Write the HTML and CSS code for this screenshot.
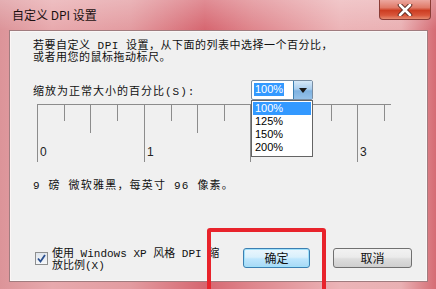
FILE: index.html
```html
<!DOCTYPE html>
<html>
<head>
  <meta charset="UTF-8">
  <title>自定义 DPI 设置</title>
  <link rel="stylesheet" href="styles.css">
</head>
<body>
  <div class="window">
    <div class="titlebar">
      <span class="title">自定义 DPI 设置</span>
      <div class="close-btn">
        <svg width="16" height="12" viewBox="0 0 16 12">
          <path d="M3 1 L13 11 M13 1 L3 11" stroke="#5a2a22" stroke-width="4.5" stroke-linecap="round"/>
          <path d="M3 1 L13 11 M13 1 L3 11" stroke="#fff" stroke-width="2.6" stroke-linecap="round"/>
        </svg>
      </div>
    </div>

    <div class="client">
      <p class="intro">若要自定义 DPI 设置，从下面的列表中选择一个百分比，<br>或者用您的鼠标拖动标尺。</p>

      <div class="scale-row">
        <span class="scale-label">缩放为正常大小的百分比(S):</span>
        <div class="combo">
          <div class="combo-field"><span class="combo-sel">100%</span></div>
          <div class="combo-btn">
            <svg width="8" height="5" viewBox="0 0 8 5"><path d="M0 0 H8 L4 5 Z" fill="#1a1a1a"/></svg>
          </div>
          <ul class="combo-list">
            <li class="active">100%</li>
            <li>125%</li>
            <li>150%</li>
            <li>200%</li>
          </ul>
        </div>
      </div>

      <div class="ruler">
        <svg width="356" height="58" viewBox="0 0 356 58">
          <g stroke="#8c8c8c" stroke-width="1">
            <path d="M0 0.5 H354"/>
            <path d="M0.5 0 V58 M107.5 0 V58 M213.5 0 V58 M320.5 0 V58"/>
            <path d="M27.5 0 V17 M80.5 0 V17 M134.5 0 V17 M187.5 0 V17 M240.5 0 V17 M294.5 0 V17 M347.5 0 V17"/>
            <path d="M53.5 0 V29 M160.5 0 V29 M267.5 0 V29"/>
          </g>
          <!-- 刻度 2 被下拉列表挡住 -->
          <g class="ruler-num">
            <text x="3" y="52">0</text>
            <text x="110" y="52">1</text>
            <text x="323" y="52">3</text>
          </g>
        </svg>
      </div>

      <p class="info">9 磅 微软雅黑，每英寸 96 像素。</p>

      <div class="footer">
        <label class="xp-check">
          <span class="checkbox">
            <svg width="9" height="9" viewBox="0 0 9 9"><path d="M1 4.5 L3.5 7.5 L8 1" fill="none" stroke="#2a4f8f" stroke-width="1.8"/></svg>
          </span>
          <span class="xp-text">使用 Windows XP 风格 DPI 缩<br>放比例(X)</span>
        </label>
        <button class="btn btn-ok">确定</button>
        <button class="btn btn-cancel">取消</button>
      </div>
    </div>

    <div class="highlight"></div>
  </div>
</body>
</html>
```

FILE: styles.css
```css
body {
  margin: 0;
  width: 436px;
  height: 289px;
  overflow: hidden;
  font-family: "Liberation Mono", "Noto Sans CJK SC", monospace;
}

.window {
  position: relative;
  width: 436px;
  height: 289px;
  box-sizing: border-box;
  padding: 0 8px 7px 9px;
  display: flex;
  flex-direction: column;
  background:
    linear-gradient(180deg, rgba(255, 255, 255, 0.25) 0%, rgba(255, 255, 255, 0) 30px),
    linear-gradient(90deg, #dc9499 0%, #e8a9ad 12%, #e39ba0 30%, #d66670 47%, #df868d 58%, #ecb4b7 78%, #eab0b3 92%, #d56c74 100%);
}

.titlebar {
  height: 30px;
  display: flex;
  justify-content: space-between;
  align-items: flex-start;
}

.title {
  margin: 6px 0 0 3px;
  font-family: "Noto Sans CJK SC", sans-serif;
  font-size: 12px;
  line-height: 18px;
  color: #1a1010;
}

.close-btn {
  width: 52px;
  height: 20px;
  margin-right: -3px;
  box-sizing: border-box;
  border: 1px solid #8a3c35;
  border-top: none;
  border-radius: 0 0 4px 4px;
  background: linear-gradient(180deg, #eca79f 0%, #e07a68 40%, #cc3d22 55%, #d8553a 80%, #e58a70 100%);
  display: flex;
  align-items: center;
  justify-content: center;
}

.client {
  flex: 1;
  background: #f0f0f0;
  border: 1px solid #a07c7f;
  box-shadow: inset 0 0 0 1px #fbf6f6;
  padding: 0 10px 0 23px;
  display: flex;
  flex-direction: column;
  font-size: 11px;
  color: #111;
}

.intro {
  margin: 9px 0 0;
  line-height: 12px;
  letter-spacing: 0.5px;
}

.scale-row {
  display: flex;
  align-items: center;
  margin-top: 16px;
  height: 20px;
}

.scale-label {
  width: 218px;
  letter-spacing: 1px;
}

.combo {
  position: relative;
  width: 62px;
  height: 20px;
  display: flex;
  box-sizing: border-box;
  border: 1px solid #7a8ea3;
  border-radius: 2px;
  background: #fff;
}

.combo-field {
  flex: 1;
  padding: 2px 0 0 2px;
}

.combo-sel {
  display: inline-block;
  background: #3399ff;
  color: #fff;
  font-family: "Liberation Sans", sans-serif;
  font-size: 11px;
  line-height: 13px;
  padding: 0 1px;
}

.combo-btn {
  width: 18px;
  border-left: 1px solid #3c7fb1;
  background: linear-gradient(180deg, #d6e9f8 0%, #a9cdee 45%, #7fb2e0 55%, #95c2ea 100%);
  display: flex;
  align-items: center;
  justify-content: center;
}

.combo-list {
  position: absolute;
  top: 19px;
  left: -1px;
  width: 62px;
  height: 57px;
  margin: 0;
  padding: 1px;
  box-sizing: border-box;
  list-style: none;
  background: #fff;
  border: 1px solid #646464;
  font-family: "Liberation Sans", sans-serif;
  font-size: 11px;
  color: #000;
  z-index: 10;
}

.combo-list li {
  height: 13px;
  line-height: 13px;
  padding-left: 2px;
}

.combo-list li.active {
  background: #3399ff;
  color: #fff;
}

.ruler {
  margin: 4px 0 0 4px;
  height: 58px;
}

.ruler svg {
  display: block;
}

.ruler-num {
  font-family: "Liberation Sans", sans-serif;
  font-size: 12px;
  fill: #222;
}

.info {
  margin: 18px 0 0;
  line-height: 12px;
  letter-spacing: 1.2px;
}

.footer {
  margin-top: auto;
  margin-bottom: 9px;
  display: flex;
  align-items: flex-start;
}

.xp-check {
  flex: 0 0 208px;
  display: flex;
  align-items: flex-start;
  gap: 4px;
  margin-left: 2px;
}

.checkbox {
  width: 13px;
  height: 13px;
  margin-top: 4px;
  box-sizing: border-box;
  border: 1px solid #8e8f8f;
  background: linear-gradient(180deg, #dfe5ec 0%, #f6f8fa 100%);
  display: flex;
  align-items: center;
  justify-content: center;
}

.xp-text {
  line-height: 12px;
}

.btn {
  height: 20px;
  padding: 0;
  box-sizing: border-box;
  border-radius: 3px;
  font-family: "Noto Sans CJK SC", sans-serif;
  font-size: 12px;
  line-height: 16px;
  color: #111;
}

.btn-ok {
  width: 67px;
  border: 1px solid #3c7fb1;
  background: linear-gradient(180deg, #eaf6fd 0%, #d9f0fc 45%, #bee6fd 55%, #a7d9f5 100%);
  box-shadow: inset 0 0 0 1px #9fe1fb;
}

.btn-cancel {
  width: 79px;
  margin-left: 23px;
  border: 1px solid #707070;
  background: linear-gradient(180deg, #f2f2f2 0%, #ebebeb 45%, #dddddd 55%, #cfcfcf 100%);
}

/* 截图上的红色标注框 */
.highlight {
  position: absolute;
  left: 207px;
  top: 228px;
  width: 119px;
  height: 72px;
  box-sizing: border-box;
  border: 4px solid #e8232b;
  border-radius: 3px;
  pointer-events: none;
}
```
